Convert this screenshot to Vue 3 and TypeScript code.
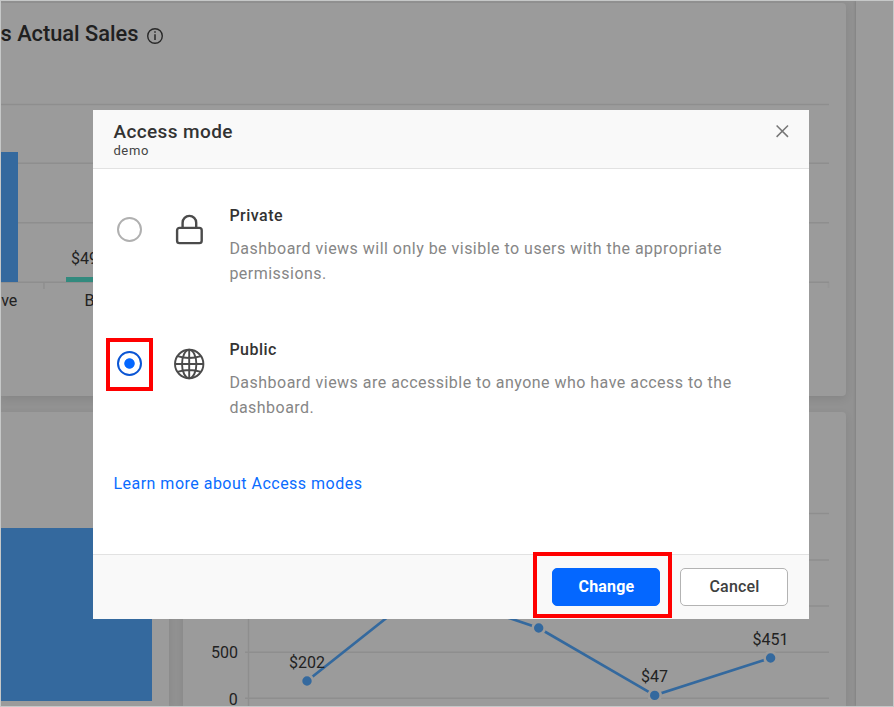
<script setup lang="ts">
import { ref } from 'vue'

interface Mode {
  id: string
  title: string
  text: string
}

const modes: Mode[] = [
  { id: 'private', title: 'Private', text: 'Dashboard views will only be visible to users with the appropriate permissions.' },
  { id: 'public', title: 'Public', text: 'Dashboard views are accessible to anyone who have access to the dashboard.' },
]
const selected = ref('public')

const salesGrid = [104.5, 163.2, 222.7, 282.3]
const trendGrid = [513.5, 560, 606, 652.2, 698.2]
const points = [
  { x: 307, y: 681 },
  { x: 423, y: 589 },
  { x: 538.7, y: 628 },
  { x: 654.7, y: 695.4 },
  { x: 770.6, y: 658 },
]
const trendPath = points.map((p) => `${p.x},${p.y}`).join(' ')
</script>

<template>
  <div class="frame">
    <div class="board">
      <section class="card top">
        <svg class="chart" width="845" height="393" viewBox="1 3 845 393">
          <text class="heading" x="0.5" y="41">s Actual Sales</text>
          <g fill="none" stroke="#282828" stroke-width="1.4">
            <circle cx="155" cy="36" r="7.3" />
            <path d="M155 34.3V40M155 31.2V32.8" stroke-width="1.5" />
          </g>
          <line v-for="y in salesGrid" :key="y" class="grid" x1="1" x2="829" :y1="y" :y2="y" />
          <path class="grid" d="M44 282V289" />
          <path class="grid" d="M828.5 282V288" opacity="0.4" />
          <rect x="1" y="152" width="17" height="130" fill="#34699e" />
          <rect x="66" y="277" width="70" height="5" fill="#328a7e" />
          <text x="71" y="264.3">$49</text>
          <text x="1.2" y="306.3">ve</text>
          <text x="84.5" y="306.3">B</text>
        </svg>
      </section>
      <div class="row">
        <section class="card left">
          <svg class="chart" width="168" height="294" viewBox="1 412 168 294">
            <rect x="1" y="528" width="151" height="173" fill="#34699e" />
          </svg>
        </section>
        <section class="card right">
          <svg class="chart" width="663" height="294" viewBox="183 412 663 294">
            <line v-for="y in trendGrid" :key="y" class="grid" x1="245" x2="829" :y1="y" :y2="y" />
            <path class="grid" d="M248.5 513V706" />
            <polyline :points="trendPath" fill="none" stroke="#34699e" stroke-width="2.7" />
            <circle v-for="p in points" :key="p.x" :cx="p.x" :cy="p.y" r="6" fill="#34699e" stroke="#9b9b9b" stroke-width="2.6" />
            <text x="211" y="658">500</text>
            <text x="228.7" y="705">0</text>
            <text x="289" y="668">$202</text>
            <text x="641" y="682">$47</text>
            <text x="752.5" y="645">$451</text>
          </svg>
        </section>
      </div>
    </div>
    <aside class="side"></aside>

    <div class="overlay">
      <div class="modal" role="dialog">
        <header class="head">
          <div>
            <h2>Access mode</h2>
            <p class="sub">demo</p>
          </div>
          <svg class="close" width="14" height="14" viewBox="0 0 14 14">
            <path d="M1.6 1.5L13 12.9M13 1.5L1.6 12.9" fill="none" stroke="#777" stroke-width="1.5" />
          </svg>
        </header>
        <div class="body">
          <div v-for="m in modes" :key="m.id" class="option" @click="selected = m.id">
            <span class="radio" :class="{ on: selected === m.id }">
              <span v-if="m.id === 'public'" class="mark mark-radio"></span>
            </span>
            <svg v-if="m.id === 'private'" class="icon" width="32" height="32" viewBox="0 0 32 32" fill="none" stroke="#4b4b4b" stroke-width="2.4">
              <rect x="4.1" y="13.9" width="24.6" height="15.2" rx="2.4" />
              <path d="M9.6 13.9V8.7a6.8 6.8 0 0 1 13.6 0V13.9" />
            </svg>
            <svg v-else class="icon" width="32" height="32" viewBox="0 0 32 32" fill="none" stroke="#4b4b4b" stroke-width="1.9">
              <circle cx="16.2" cy="16" r="14.2" />
              <ellipse cx="16.2" cy="16" rx="7.2" ry="14.2" />
              <path d="M16.2 1.8V30.2M2 16H30.4M4.4 8.2Q16.2 11.8 28 8.2M4.4 23.8Q16.2 20.2 28 23.8" />
            </svg>
            <div class="copy">
              <h3>{{ m.title }}</h3>
              <p>{{ m.text }}</p>
            </div>
          </div>
          <a class="learn">Learn more about Access modes</a>
        </div>
        <footer class="foot">
          <button class="btn primary">Change<span class="mark mark-btn"></span></button>
          <button class="btn">Cancel</button>
        </footer>
      </div>
    </div>
  </div>
</template>

<style>
body {
  margin: 0;
  overflow: hidden;
}
</style>

<style scoped>
* {
  box-sizing: border-box;
}
.frame {
  position: relative;
  display: flex;
  width: 894px;
  height: 707px;
  border: 1px solid #c6c8c8;
  background: #929292;
  font-family: Roboto, 'Liberation Sans', sans-serif;
  overflow: hidden;
}
.board {
  display: flex;
  flex-direction: column;
  gap: 16px;
  width: 855px;
  padding-top: 2px;
}
.card {
  background: #9b9b9b;
  box-shadow: 0 3px 8px rgba(0, 0, 0, 0.09);
}
.top {
  width: 845px;
  height: 393px;
  border-radius: 0 4px 4px 0;
}
.row {
  display: flex;
  gap: 14px;
}
.left {
  width: 168px;
  height: 294px;
  border-radius: 0 4px 0 0;
}
.right {
  width: 663px;
  height: 294px;
  border-radius: 4px 4px 0 0;
}
.side {
  flex: 1;
  background: #9b9b9b;
  box-shadow: 0 0 3px rgba(0, 0, 0, 0.2);
}
.chart {
  display: block;
}
.chart text {
  font-size: 16px;
  fill: #222;
}
.chart .heading {
  font-size: 21.8px;
  font-weight: 500;
  fill: #202020;
}
.grid {
  fill: none;
  stroke: #8e8e8e;
  stroke-width: 1.4;
}
.overlay {
  position: absolute;
  inset: 0;
  padding: 109px 0 0 92px;
}
.modal {
  display: flex;
  flex-direction: column;
  width: 716px;
  height: 509px;
  background: #fff;
  color: #333;
}
.head {
  display: flex;
  justify-content: space-between;
  height: 59px;
  padding: 10px 20px 0 20.4px;
  background: #f9f9f9;
  border-bottom: 1px solid #e2e2e2;
}
h2,
h3,
p {
  margin: 0;
}
h2 {
  font-size: 19px;
  line-height: 23px;
  font-weight: 500;
  letter-spacing: 0.4px;
}
.sub {
  font-size: 13px;
  line-height: 15px;
  letter-spacing: 0.65px;
  color: #444;
}
.close {
  margin-top: 4px;
}
.body {
  flex: 1;
  padding: 35px 20px 0;
}
.option {
  display: flex;
  height: 134px;
}
.radio {
  position: relative;
  width: 25px;
  height: 25px;
  margin: 13px 0 0 4px;
  border: 2px solid #b0b0b0;
  border-radius: 50%;
}
.radio.on {
  border-color: #0a55d4;
  background: radial-gradient(circle, #0467ff 4.8px, transparent 5.6px);
}
.icon {
  flex: none;
  margin: 10px 0 0 31px;
}
.copy {
  width: 520px;
  margin-left: 24.4px;
}
h3 {
  font-size: 16px;
  line-height: 24px;
  font-weight: 500;
  letter-spacing: 0.48px;
}
.copy p {
  margin-top: 8px;
  font-size: 16px;
  line-height: 25px;
  letter-spacing: 0.48px;
  color: #868686;
}
.learn {
  display: block;
  margin: 1px 0 0 0.4px;
  font-size: 16px;
  line-height: 22px;
  letter-spacing: 0.49px;
  color: #0a6cff;
}
.foot {
  display: flex;
  justify-content: flex-end;
  gap: 20px;
  height: 65px;
  padding: 13px 21px 0;
  background: #f9f9f9;
  border-top: 1px solid #e2e2e2;
}
.btn {
  position: relative;
  width: 108px;
  height: 38px;
  padding: 0 0 1px 1px;
  border: 1px solid #b3b3b3;
  border-radius: 5px;
  background: #fff;
  color: #404040;
  font: 500 16px Roboto, 'Liberation Sans', sans-serif;
  letter-spacing: 0.2px;
}
.primary {
  border-color: #0467ff;
  background: #0467ff;
  color: #fff;
  font-weight: 700;
}
.mark {
  position: absolute;
  border: 4px solid #f00;
}
.mark-radio {
  left: -13px;
  top: -15px;
  width: 47px;
  height: 53px;
}
.mark-btn {
  left: -20px;
  top: -17px;
  width: 139px;
  height: 66px;
}
</style>
